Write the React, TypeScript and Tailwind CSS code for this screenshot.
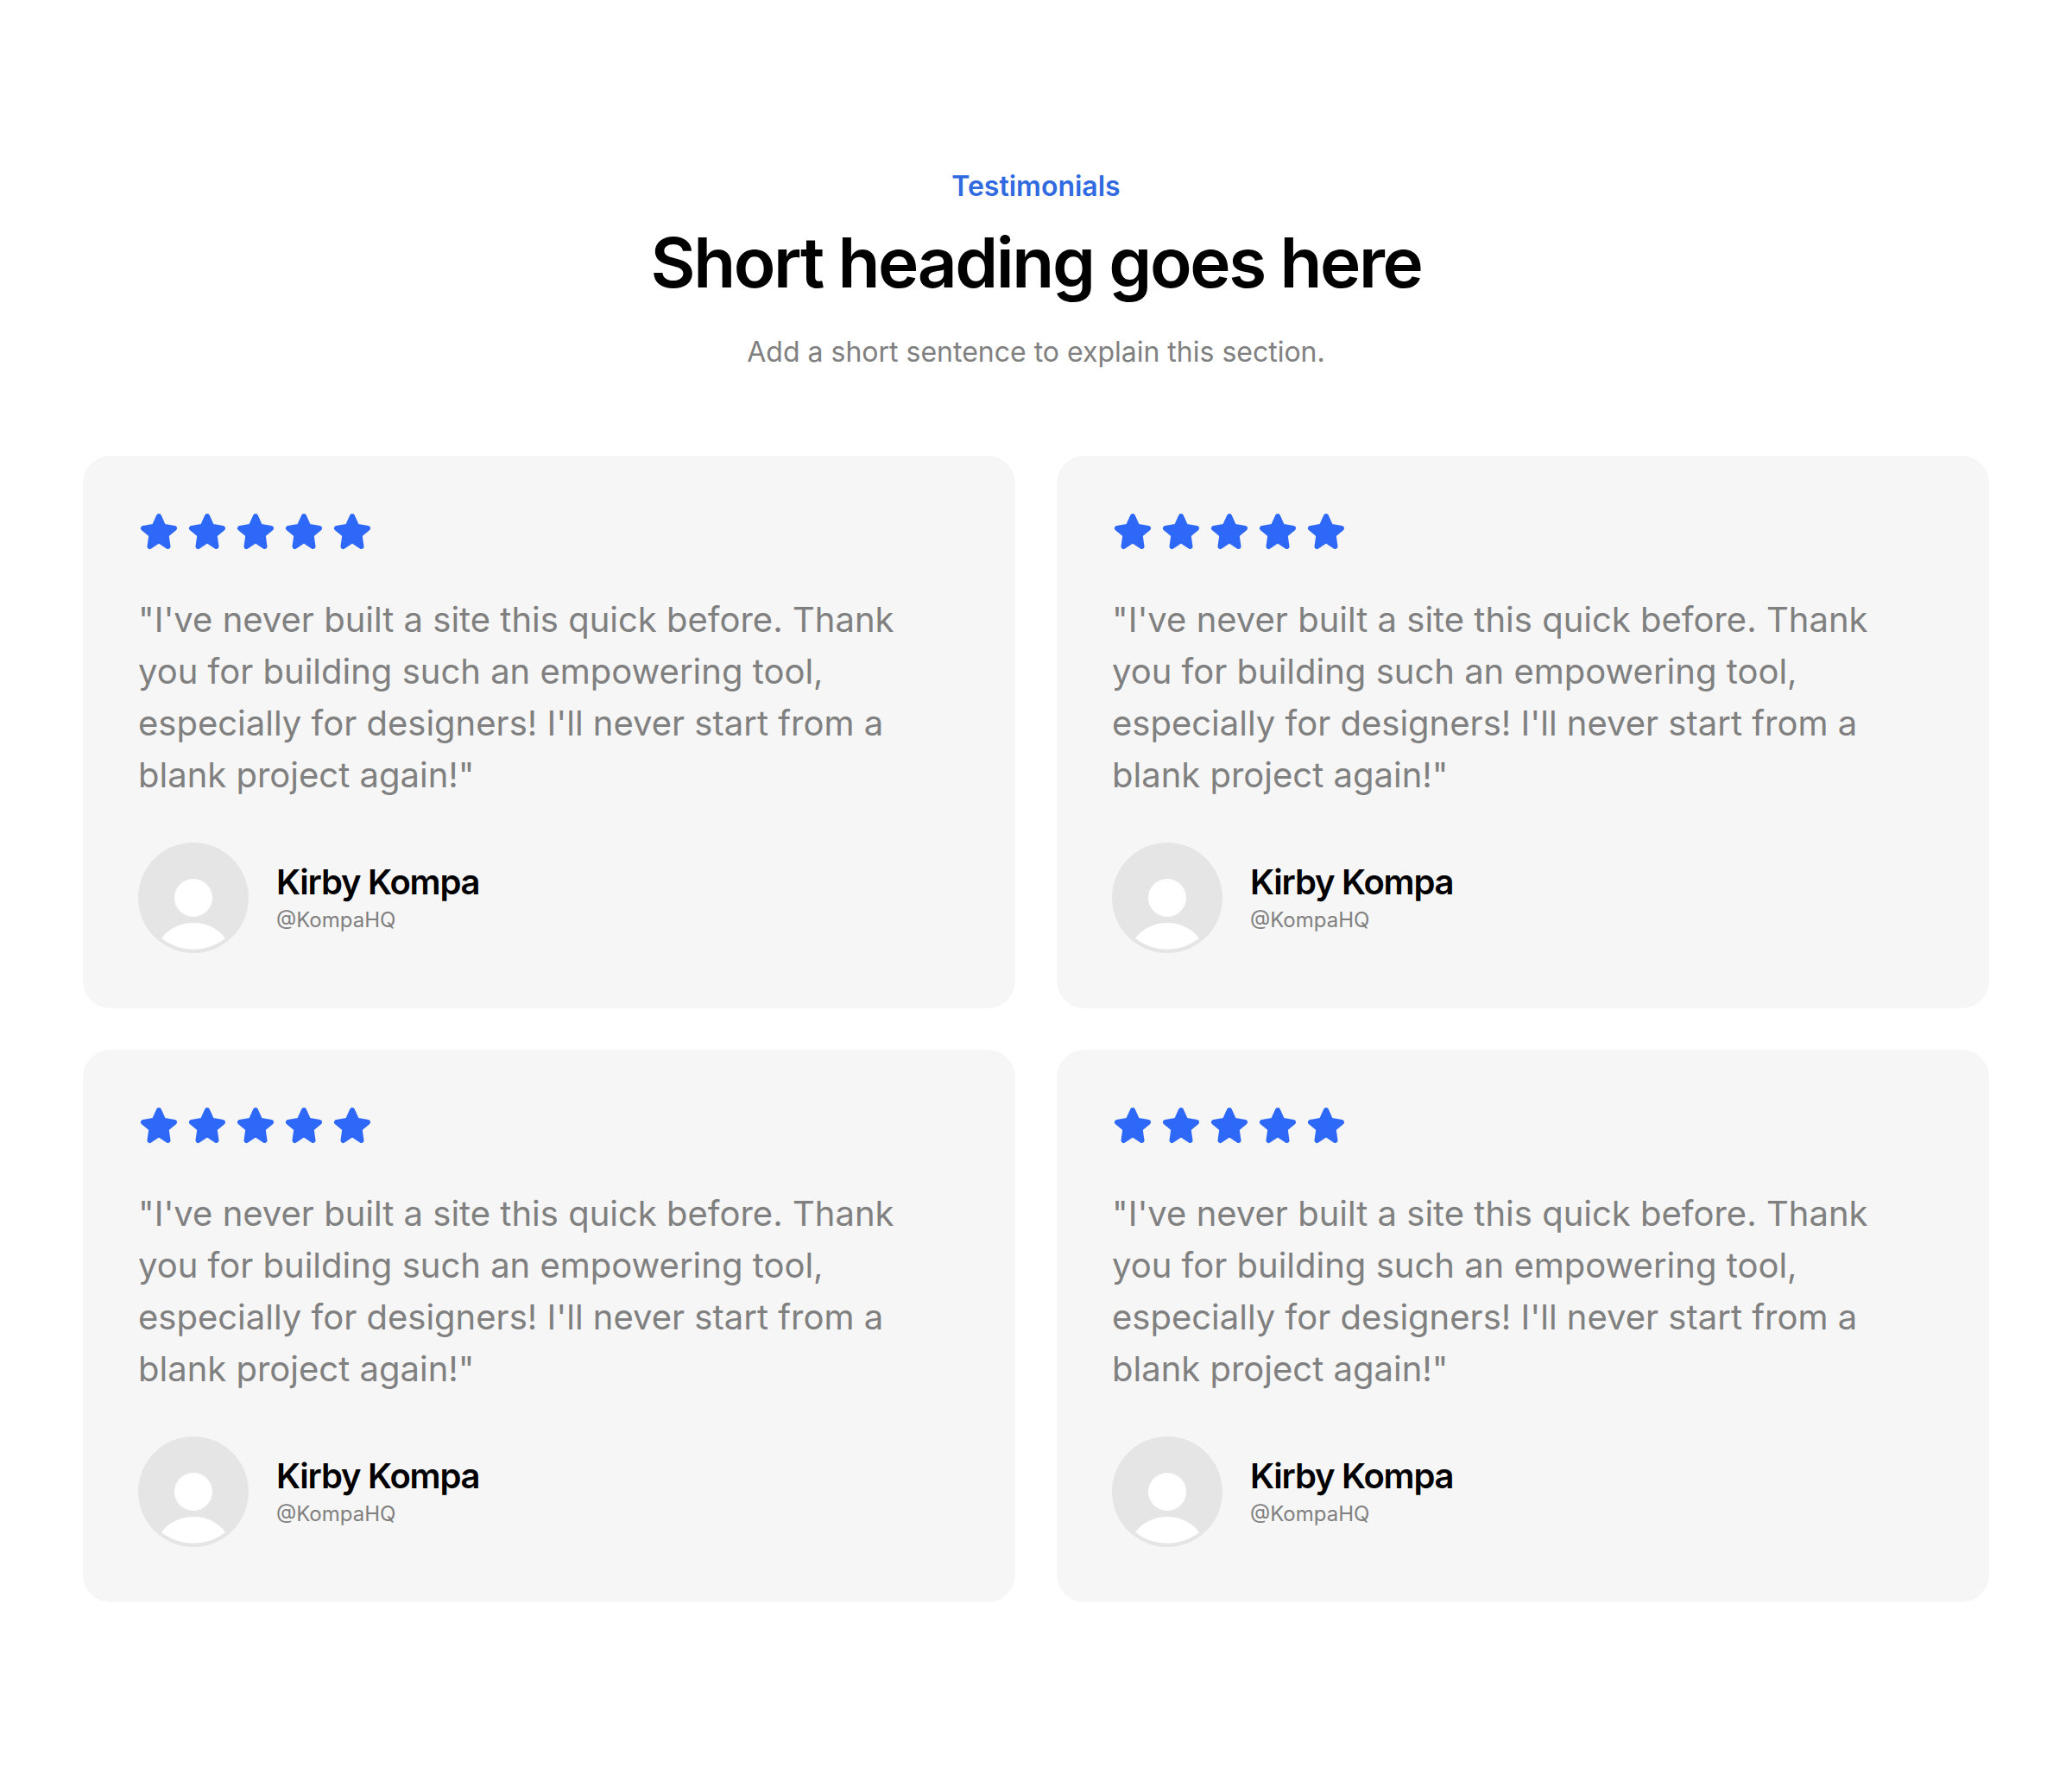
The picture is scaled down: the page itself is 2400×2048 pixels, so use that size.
const Star = () => (
  <svg viewBox="0 0 48 48" className="w-12 h-12 shrink-0" fill="#2d68f8" stroke="#2d68f8" strokeWidth="6" strokeLinejoin="round">
    <path d="M24 6 L29.3 17.7 L42 20 L32.6 27.8 L34.5 41 L24 34 L13.5 41 L15.4 27.8 L6 20 L18.7 17.7 Z" />
  </svg>
);

const Avatar = () => (
  <svg viewBox="0 0 128 128" className="w-32 h-32 shrink-0">
    <circle cx="64" cy="64" r="64" fill="#e5e5e5" />
    <circle cx="64" cy="64" r="22" fill="#ffffff" />
    <path d="M27 111 C35 100 48 93 64 93 C80 93 93 100 101 111 A60 60 0 0 1 27 111 Z" fill="#ffffff" />
  </svg>
);

const TestimonialCard = () => (
  <div className="flex flex-col gap-12 p-16 rounded-[32px] bg-[#f6f6f6]">
    <div className="flex gap-2">
      {[0, 1, 2, 3, 4].map((i) => (
        <Star key={i} />
      ))}
    </div>
    <p className="text-[40px] leading-[60px] text-[#808080]">
      "I've never built a site this quick before. Thank you for building such an empowering tool, especially for
      designers! I'll never start from a blank project again!"
    </p>
    <div className="flex items-center gap-8">
      <Avatar />
      <div className="flex flex-col">
        <span className="text-[40px] leading-[52px] font-semibold tracking-[-1.2px] text-black">Kirby Kompa</span>
        <span className="text-2xl leading-9 text-[#808080]">@KompaHQ</span>
      </div>
    </div>
  </div>
);

export default function App() {
  return (
    <section className="px-24 py-48 bg-white font-['Inter',sans-serif]">
      <div className="flex flex-col items-center mb-24 text-center">
        <span className="text-[32px] leading-[48px] font-semibold text-[#2f6ae0] mb-4">Testimonials</span>
        <h2 className="text-[80px] leading-[96px] font-semibold tracking-[-2.4px] text-black mb-8">
          Short heading goes here
        </h2>
        <p className="text-[32px] leading-[48px] text-[#808080]">Add a short sentence to explain this section.</p>
      </div>
      <div className="grid grid-cols-2 gap-12">
        <TestimonialCard />
        <TestimonialCard />
        <TestimonialCard />
        <TestimonialCard />
      </div>
    </section>
  );
}
